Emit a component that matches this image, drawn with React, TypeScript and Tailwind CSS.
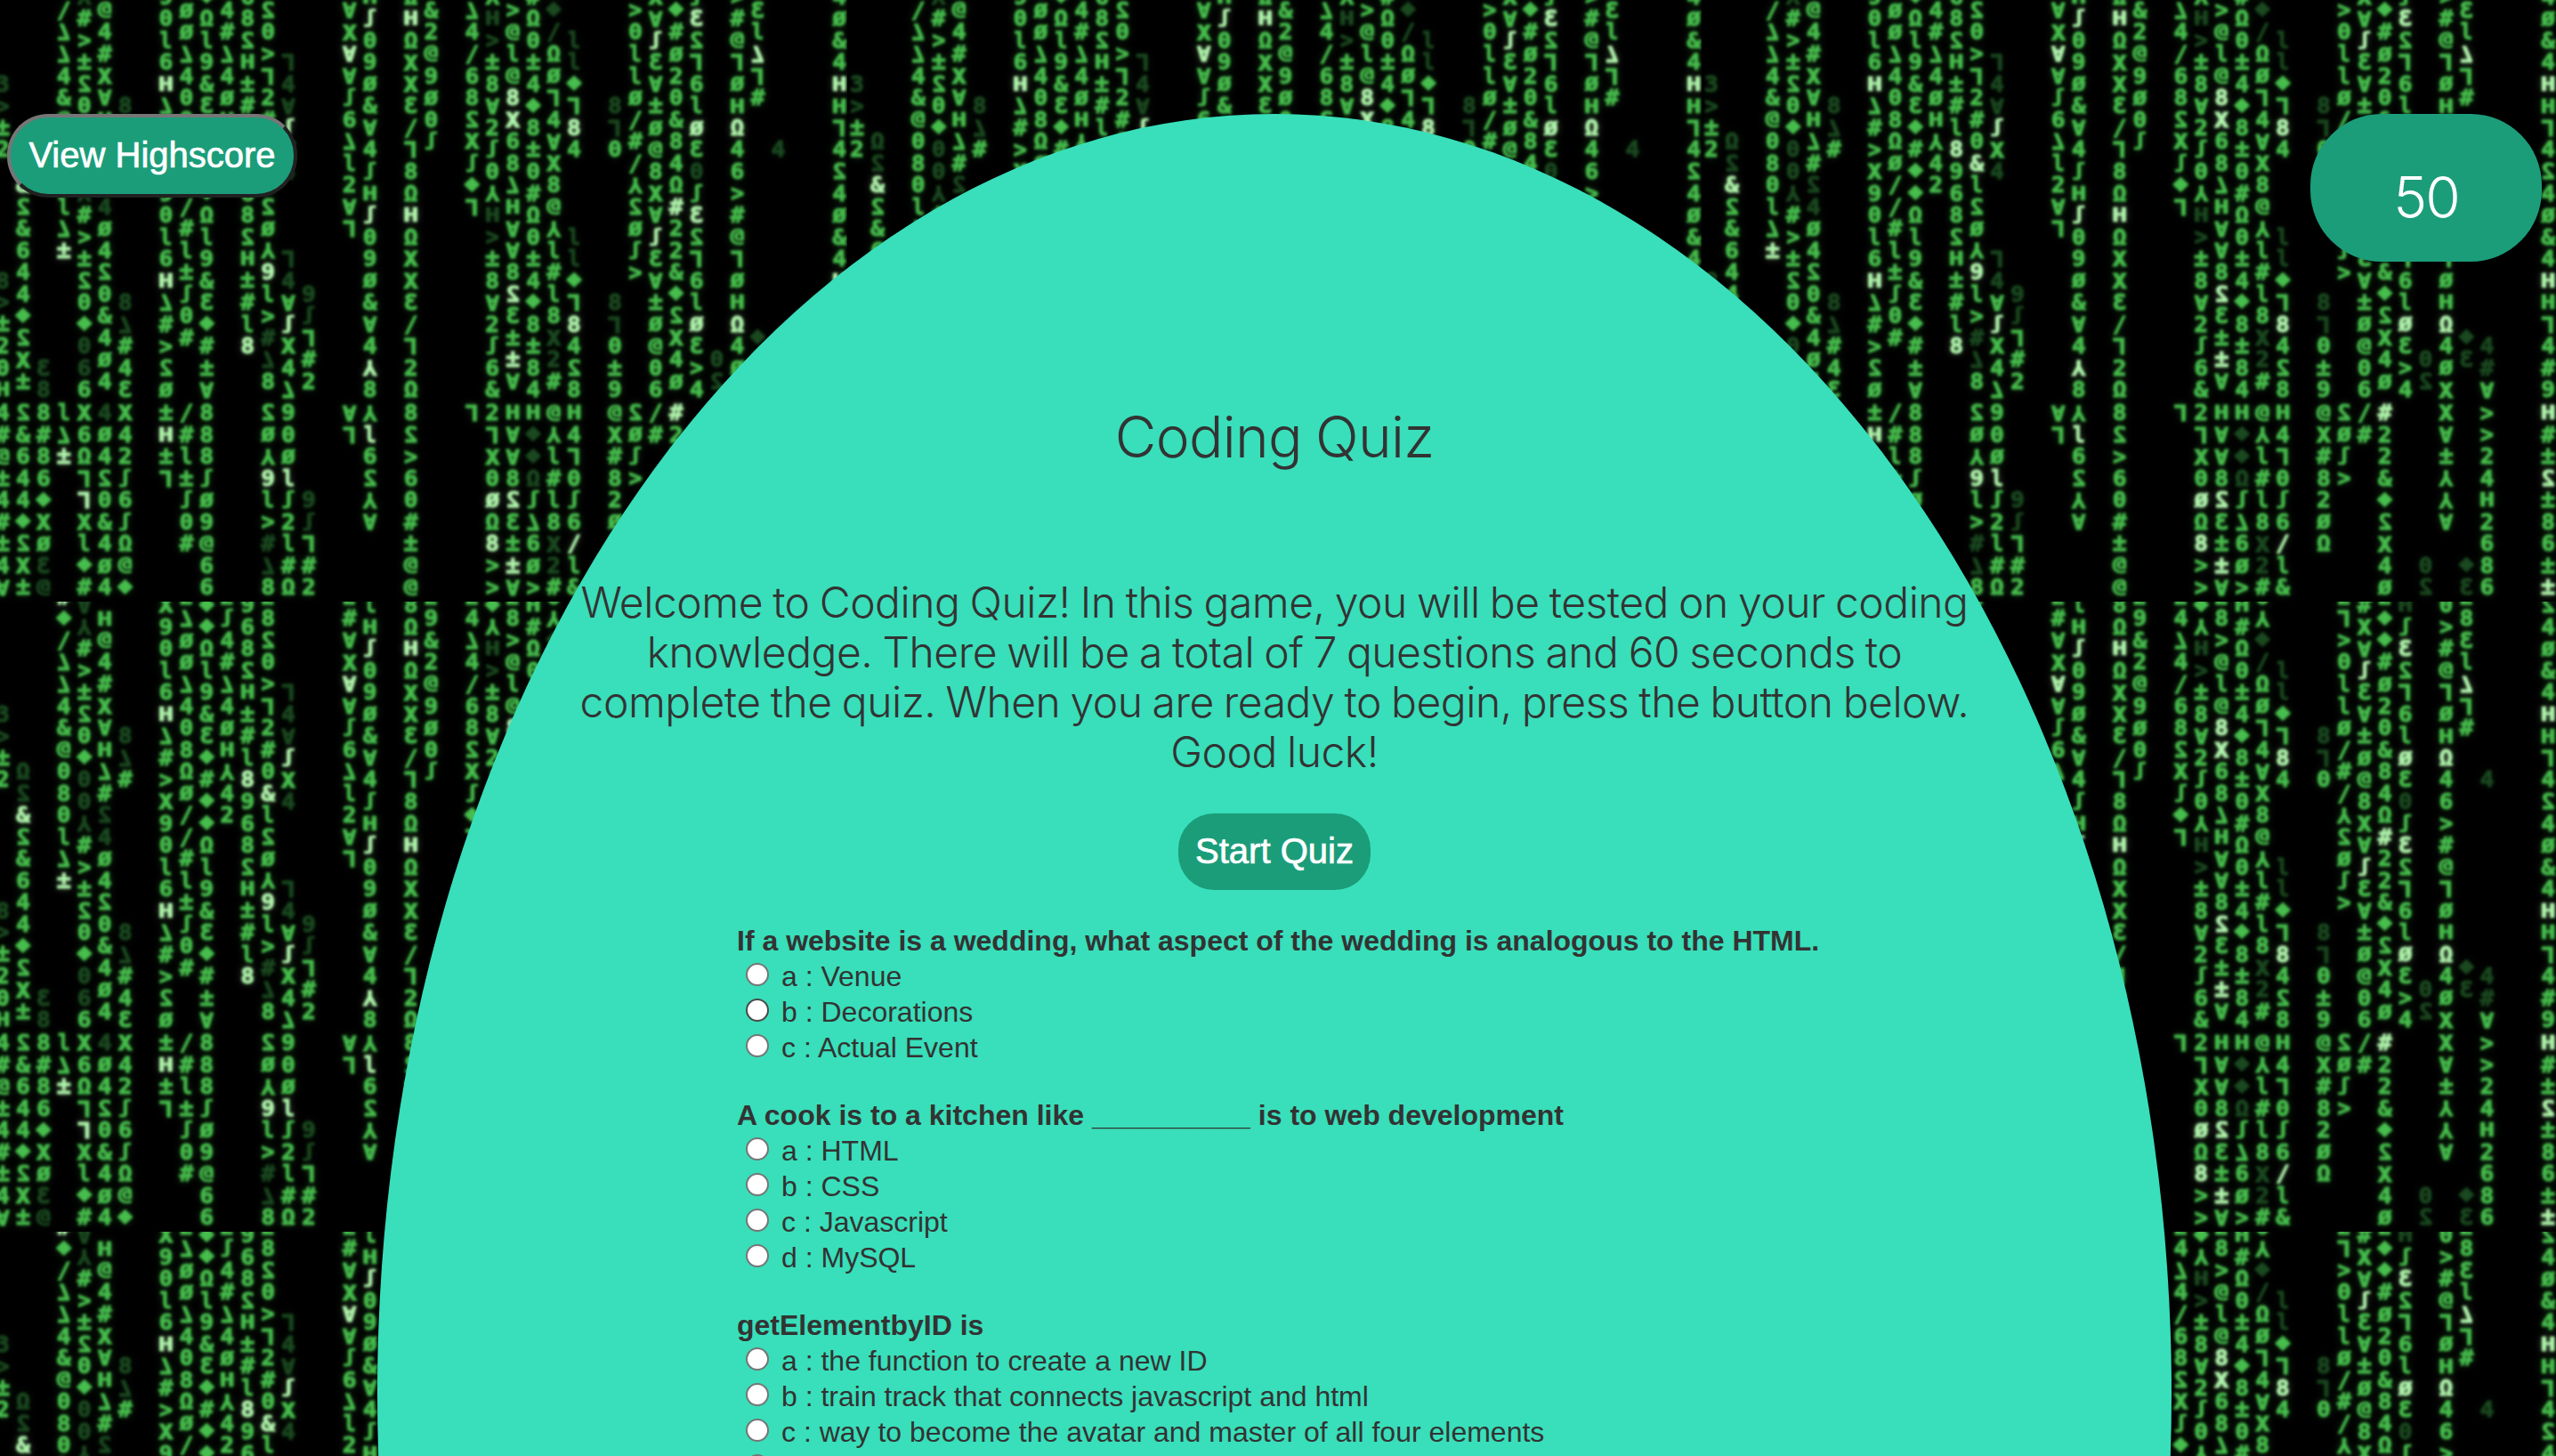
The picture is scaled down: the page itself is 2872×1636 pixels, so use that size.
import React from "react";

type RainColumn = {
  col: number;
  shifted: boolean;
  upper: string;
  lower: string;
};

// "*" lights the next glyph, "." dims it, a space leaves the cell empty.
const RAIN: RainColumn[] = [
  { col: 0, shifted: false, upper: "     .3.>±Z     .8.>±Z0Ⅱ", lower: "4#@±4#±4∀" },
  { col: 1, shifted: true, upper: "        .Ω.S*&S&644♦Sx±", lower: "S&644♦Sx±" },
  { col: 2, shifted: false, upper: "                  .E.8", lower: "8#86♦xØ.E.@" },
  { col: 3, shifted: true, upper: "*#♦/∠∠4&@080l∠*±", lower: "l∠*±" },
  { col: 4, shifted: false, upper: ".∀.⅄#>±S0♦.0.0.⅄#>±S0♦.0.66", lower: "x6Ω7*7xl♦#" },
  { col: 5, shifted: true, upper: " Ⅱ@4#x∀Ⅱ∠#.S.4Ø4S0&4Ø4", lower: ".4Ø4S0&4Ø4" },
  { col: 6, shifted: false, upper: "      .8.∠#      .8.∠#4E", lower: "x4Zʃ6ʃΩ@♦" },
  { col: 8, shifted: false, upper: "x90l6*Ⅱ∠#>x90l6*Ⅱ∠#>SØ", lower: "±*Ⅱ±7" },
  { col: 9, shifted: true, upper: "Z∠ØØ∠408ΩØ//#l±ʃ0#", lower: "/#l±ʃ0#" },
  { col: 10, shifted: false, upper: "♦♦Ωl9&E♦#♦♦Ωl9&E♦#±∀", lower: "888ʃØ9@66" },
  { col: 11, shifted: true, upper: "Zʃ4#∠4ØⅡ⅄4Z", lower: "" },
  { col: 12, shifted: false, upper: "968SⅡ±#l*8968SⅡ±#l*8", lower: "" },
  { col: 13, shifted: true, upper: "Z8S0>7Z#0*&lSØ⅄*9l>.#.∠8", lower: "SØ⅄*9l>.#.∠8" },
  { col: 14, shifted: false, upper: "    .7.4.∀*ʃx.4   .7.4∀*ʃx4∠", lower: "90Ø*lʃZl#Ω" },
  { col: 15, shifted: true, upper: "               .9.ʃ7#Z", lower: "    .9.ʃ7#Z" },
  { col: 17, shifted: true, upper: "Z#∀x*∀∀ʃ6∠lZ∀7", lower: "∀7" },
  { col: 18, shifted: false, upper: "lⅡ*ʃ09Ø&∀4ʃⅡ*ʃ09Ø&∀4*⅄8", lower: "⅄*l6S⅄∀" },
  { col: 20, shifted: false, upper: "8Ω*ⅡΩxxE/78Ω*ⅡΩxxE/7ZΩ", lower: "8S>60#±@@" },
  { col: 21, shifted: true, upper: "Z9&Z@9Ø0ʃ", lower: "" },
  { col: 23, shifted: true, upper: "Z4∠4/68Sxʃ♦7", lower: "7" },
  { col: 24, shifted: false, upper: "♦⅄.Ⅱ.>±8∀Zʃ0⅄.Ⅱ.>±8∀Zʃ6&", lower: "Z7x0*ØΩ*8>>" },
  { col: 25, shifted: true, upper: "Z8>@l@*8*x68∠Ⅱ∀∀8*SE±*±∀", lower: "Ⅱ∀∀8*SE±*±∀" },
  { col: 26, shifted: false, upper: "Ⅱ#Ω0±4♦8±0#Ω0±4♦8±84", lower: "Ⅱ.♦.♦.Ωʃ∠6Ø>" },
  { col: 27, shifted: true, upper: "0⅄.♦./ΩØ74∀x8@⅄l#l8.x.Z#", lower: "@⅄l#l8.x.Z#" },
  { col: 28, shifted: false, upper: "   .l.l♦7*84   .l.l♦7*84S8", lower: "Ⅱ470ʃ6*/l&" },
  { col: 30, shifted: false, upper: "      .8.70      .8.70±9", lower: "@x#8ZØΩ" },
  { col: 31, shifted: true, upper: "Z7>0llØ/#/⅄SØʃ>", lower: "SØʃ>" },
  { col: 32, shifted: false, upper: "#x∀*ʃE∀±Ø@8x∀*ʃE∀±Ø@06", lower: "/#" },
  { col: 33, shifted: true, upper: "Z♦♦#ØZ0&84Ω*#ZZ&♦Sx4Ø", lower: "*#ZZ&♦Sx4Ø" },
  { col: 34, shifted: false, upper: ".Ⅱʃ*ES76l*ØE.0ʃ*ES76l*ØE>4", lower: "" },
  { col: 35, shifted: true, upper: "                  .0.S", lower: "       .0.S" },
  { col: 36, shifted: false, upper: "0>#@7ØⅡ*Ω46>#@7ØⅡ*Ω4Øx", lower: "x∀±⅄⅄∀" },
  { col: 37, shifted: true, upper: "Z8El*∠7#          .♦.E", lower: "       .♦.E" },
  { col: 38, shifted: false, upper: "        .4        .4.#∀", lower: ">>Z4ⅡZ686" },
  { col: 41, shifted: false, upper: "S4Ø&4*ⅡⅡ74S4Ø&4*ⅡⅡ74#9", lower: "*Ⅱ#±*S±86±*±" },
];

type Shape = { text: string; scale: string; y: number };

const DEFAULT_SCALE = "scale(1.1 1)";

// Glyphs whose drawn form is flipped or needs another size than the digits.
const SHAPES: Record<string, Shape> = {
  E: { text: "3", scale: "scale(-1.1 1)", y: 8.5 },
  S: { text: "2", scale: "scale(-1.1 1)", y: 8.5 },
  Z: { text: "2", scale: DEFAULT_SCALE, y: 8.5 },
  Ø: { text: "Ø", scale: "scale(1.1 0.9)", y: 9 },
  x: { text: "x", scale: "scale(1.2 1.25)", y: 7 },
  "♦": { text: "♦", scale: "scale(1.5 1.1)", y: 8 },
  "7": { text: "L", scale: "scale(-1.1 -1)", y: 8.5 },
  "∠": { text: "7", scale: "scale(1.1 -1)", y: 8.5 },
  "∀": { text: "A", scale: "scale(1.1 -0.95)", y: 8.5 },
  "⅄": { text: "Y", scale: "scale(1.1 -0.95)", y: 8.5 },
  "±": { text: "±", scale: "scale(1.15 1.1)", y: 7.5 },
  ">": { text: ">", scale: "scale(1.05 1.1)", y: 8 },
  Ⅱ: { text: "H", scale: "scale(1.2 0.85)", y: 9 },
  ʃ: { text: "ʃ", scale: "scale(1 0.85)", y: 6.5 },
  "@": { text: "@", scale: "scale(1.1 0.9)", y: 6.5 },
  l: { text: "l", scale: "scale(0.95 1)", y: 8.5 },
};

const PITCH = 24.53;

type Cell = { glyph: string; level: string; row: number };

function readCells(line: string): Cell[] {
  const cells: Cell[] = [];
  let level = "n";
  let row = 0;
  for (const ch of line) {
    if (ch === "*" || ch === ".") {
      level = ch;
      continue;
    }
    if (ch !== " ") cells.push({ glyph: ch, level, row });
    level = "n";
    row += 1;
  }
  return cells;
}

function Glyph({ cell, x, y }: { cell: Cell; x: number; y: number }) {
  const color = cell.level === "*" ? "#b0f5ac" : cell.level === "." ? "#1a481f" : "#46bd4c";
  const shape = SHAPES[cell.glyph] ?? { text: cell.glyph, scale: DEFAULT_SCALE, y: 8.5 };
  return (
    <text
      x={0}
      y={shape.y}
      fill={color}
      stroke={color}
      strokeWidth={0.8}
      textAnchor="middle"
      transform={`translate(${x} ${y}) ${shape.scale}`}
    >
      {shape.text}
    </text>
  );
}

function DigitalRain() {
  return (
    <svg className="absolute inset-0 h-full w-full" aria-hidden="true">
      <defs>
        <pattern id="rain" x="-8" y="-32" width="960" height="708" patternUnits="userSpaceOnUse">
          <rect width="960" height="708" fill="#000000" />
          <g
            filter="url(#soft)"
            className="font-['DejaVu_Sans_Mono','DejaVu_Sans',monospace] text-[24px] font-bold"
          >
            {RAIN.map((c) => {
              const x = 11 + 22.93 * c.col;
              const top = c.shifted ? -5.6 : 3.7;
              return (
                <g key={c.col}>
                  {readCells(c.upper).map((cell) => (
                    <Glyph key={`u${cell.row}`} cell={cell} x={x} y={top + PITCH * cell.row} />
                  ))}
                  {readCells(c.lower).map((cell) => (
                    <Glyph key={`l${cell.row}`} cell={cell} x={x} y={495.7 + PITCH * cell.row} />
                  ))}
                </g>
              );
            })}
          </g>
        </pattern>
        <filter
          id="soft"
          x="0"
          y="0"
          width="960"
          height="708"
          filterUnits="userSpaceOnUse"
          colorInterpolationFilters="sRGB"
        >
          <feGaussianBlur in="SourceGraphic" stdDeviation="1.4" result="glyphs" />
          <feGaussianBlur in="SourceGraphic" stdDeviation="4" result="wide" />
          <feComponentTransfer in="wide" result="halo">
            <feFuncA type="linear" slope="0.35" />
          </feComponentTransfer>
          <feMerge>
            <feMergeNode in="halo" />
            <feMergeNode in="glyphs" />
          </feMerge>
        </filter>
      </defs>
      <rect width="100%" height="100%" fill="url(#rain)" />
    </svg>
  );
}

type Question = { title: string; options: string[] };

const QUESTIONS: Question[] = [
  {
    title: "If a website is a wedding, what aspect of the wedding is analogous to the HTML.",
    options: ["a : Venue", "b : Decorations", "c : Actual Event"],
  },
  {
    title: "A cook is to a kitchen like __________ is to web development",
    options: ["a : HTML", "b : CSS", "c : Javascript", "d : MySQL"],
  },
  {
    title: "getElementbyID is",
    options: [
      "a : the function to create a new ID",
      "b : train track that connects javascript and html",
      "c : way to become the avatar and master of all four elements",
      "",
    ],
  },
];

function Option({ label, active }: { label: string; active: boolean }) {
  return (
    <label className="flex h-10 items-start pl-[10px]">
      <span
        className={
          active
            ? "mt-[5px] size-[26px] shrink-0 rounded-full border-2 border-[#4a4a4a] bg-white"
            : "mt-[5px] size-[26px] shrink-0 rounded-full border-2 border-[#767676] bg-white"
        }
      />
      <span className="ml-[14px] whitespace-nowrap">{label}</span>
    </label>
  );
}

export default function App() {
  return (
    <div className="relative h-[1636px] w-[2872px] overflow-hidden bg-black font-['Liberation_Sans',Arial,sans-serif] text-[#333333]">
      <DigitalRain />
      <div className="relative flex items-start pt-32 pl-2">
        <button className="h-[94px] w-[326px] shrink-0 rounded-[46px] border-4 border-t-[#767676] border-r-[#212121] border-b-[#212121] border-l-[#767676] bg-[#1b9d7a] pb-[2px] text-[40px] leading-[46px] whitespace-nowrap text-white [-webkit-text-stroke:0.7px_white]">
          View Highscore
        </button>

        <main className="ml-[90px] flex h-[2876px] w-[2016px] shrink-0 flex-col items-center rounded-[50%] bg-[#38dfba]">
          <h1 className="mt-[328px] font-['Inter'] text-[64px] leading-[70px] font-light tracking-[-0.7px] whitespace-nowrap [word-spacing:-2px]">
            Coding Quiz
          </h1>
          <p className="mt-[123px] text-center font-['Inter'] text-[48px] leading-[56px] font-light tracking-[-0.48px] whitespace-nowrap [word-spacing:-1.9px]">
            Welcome to Coding Quiz! In this game, you will be tested on your coding
            <br />
            knowledge. There will be a total of 7 questions and 60 seconds to
            <br />
            complete the quiz. When you are ready to begin, press the button below.
            <br />
            Good luck!
          </p>
          <button className="mt-[41px] h-[86px] w-[216px] rounded-[40px] bg-[#1b9d7a] pb-[2px] text-[40px] leading-[46px] whitespace-nowrap text-white [-webkit-text-stroke:0.7px_white]">
            Start Quiz
          </button>
          <div className="mt-[37px] flex w-[1208px] flex-col gap-[36px] text-[32px] leading-10">
            {QUESTIONS.map((q, qi) => (
              <section key={q.title}>
                <h2 className="font-bold whitespace-nowrap">{q.title}</h2>
                {q.options.map((o, oi) => (
                  <Option key={oi} label={o} active={qi === 0 && oi === 1} />
                ))}
              </section>
            ))}
          </div>
        </main>

        <div className="ml-[156px] flex h-[166px] w-[260px] shrink-0 items-center justify-center rounded-[80px] bg-[#1b9d7a] pt-[22px] font-['Inter'] text-[64px] leading-[70px] font-light tracking-[-2px] text-white">
          50
        </div>
      </div>
    </div>
  );
}
